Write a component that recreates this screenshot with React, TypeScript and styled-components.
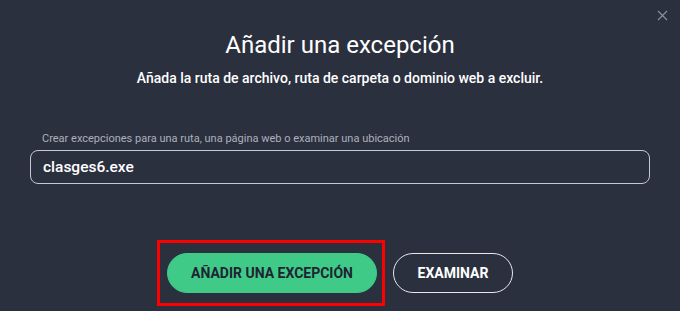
import React from "react";
import styled, { createGlobalStyle } from "styled-components";

const GlobalStyle = createGlobalStyle`
  html, body {
    margin: 0;
    padding: 0;
    background: #2b303f;
  }
  body {
    font-family: Roboto, "Liberation Sans", sans-serif;
  }
`;

export default function App() {
  return (
    <>
      <GlobalStyle />
      <Dialog>
        <CloseButton aria-label="Cerrar">
          <svg width="11" height="11" viewBox="0 0 11 11">
            <path d="M1 1 L10 10 M10 1 L1 10" stroke="#8c92a0" strokeWidth="1.1" />
          </svg>
        </CloseButton>
        <Title>Añadir una excepción</Title>
        <Subtitle>
          Añada la ruta de archivo, ruta de carpeta o dominio web a excluir.
        </Subtitle>
        <Field>
          <Label>
            Crear excepciones para una ruta, una página web o examinar una
            ubicación
          </Label>
          <Input defaultValue="clasges6.exe" />
        </Field>
        <Actions>
          <Highlight>
            <Button $primary>Añadir una excepción</Button>
          </Highlight>
          <Button>Examinar</Button>
        </Actions>
      </Dialog>
    </>
  );
}

const Dialog = styled.div`
  position: relative;
  box-sizing: border-box;
  width: 680px;
  height: 311px;
  padding: 31px 30px 0;
  display: flex;
  flex-direction: column;
  color: #ffffff;
`;

const CloseButton = styled.button`
  position: absolute;
  top: 10px;
  right: 12px;
  width: 11px;
  height: 11px;
  padding: 0;
  border: 0;
  background: none;
  display: flex;
  cursor: pointer;
`;

const Title = styled.h1`
  margin: 0;
  font-size: 24px;
  line-height: 28px;
  font-weight: 400;
  text-align: center;
`;

const Subtitle = styled.p`
  margin: 11px 0 0;
  font-size: 14px;
  line-height: 17px;
  font-weight: 500;
  text-align: center;
`;

const Field = styled.div`
  margin-top: 45px;
  display: flex;
  flex-direction: column;
  gap: 4px;
`;

const Label = styled.label`
  padding-left: 12px;
  font-size: 11px;
  line-height: 14px;
  color: #adb1ba;
`;

const Input = styled.input`
  box-sizing: border-box;
  width: 100%;
  height: 34px;
  padding: 0 12px;
  border: 1px solid #c5c9d1;
  border-radius: 8px;
  background: transparent;
  color: #ffffff;
  font-family: Roboto, "Liberation Sans", sans-serif;
  font-size: 15.5px;
  font-weight: 500;
  outline: none;
`;

const Actions = styled.div`
  margin-top: 69px;
  display: flex;
  justify-content: center;
  gap: 16px;
`;

const Highlight = styled.div`
  position: relative;
  display: flex;

  &::after {
    content: "";
    position: absolute;
    top: -13px;
    bottom: -13px;
    left: -10px;
    right: -8px;
    border: 3px solid #ff0000;
    pointer-events: none;
  }
`;

const Button = styled.button<{ $primary?: boolean }>`
  box-sizing: border-box;
  height: 40px;
  width: ${(p) => (p.$primary ? "210px" : "120px")};
  border-radius: 20px;
  border: 1px solid ${(p) => (p.$primary ? "#3fcb87" : "#e6e8ec")};
  background: ${(p) => (p.$primary ? "#3fcb87" : "transparent")};
  color: ${(p) => (p.$primary ? "#1f2432" : "#ffffff")};
  font-family: Roboto, "Liberation Sans", sans-serif;
  font-size: 14px;
  font-weight: 700;
  text-transform: uppercase;
  cursor: pointer;
`;
